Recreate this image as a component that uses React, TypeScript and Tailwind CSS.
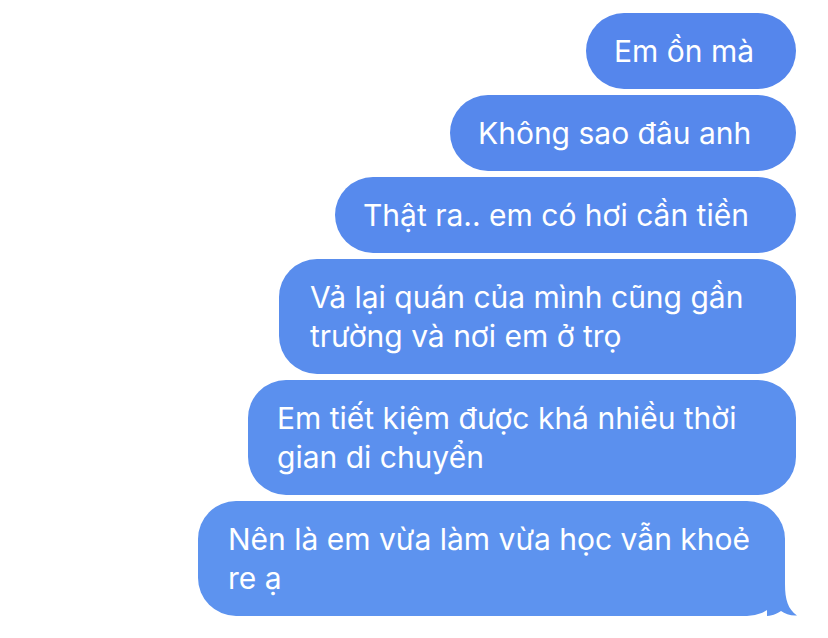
const messages = [
  { text: "Em ồn mà", width: "w-[210px]", bg: "bg-[#5586ec]" },
  { text: "Không sao đâu anh", width: "w-[346px]", bg: "bg-[#5688ec]" },
  { text: "Thật ra.. em có hơi cần tiền", width: "w-[461px]", bg: "bg-[#578aed]" },
  { text: "Vả lại quán của mình cũng gần trường và nơi em ở trọ", width: "w-[517px]", bg: "bg-[#598ded]", pl: "pl-[31px]" },
  { text: "Em tiết kiệm được khá nhiều thời gian di chuyển", width: "w-[548px]", bg: "bg-[#5b90ee]", pl: "pl-[29px]" },
];

function Tail() {
  return (
    <svg
      className="absolute right-[-12px] bottom-0"
      width="30"
      height="40"
      viewBox="0 0 30 40"
    >
      <path
        d="M0 0 H18 V8 C18 24 21 33 30 39.5 C24 40 18 38 14 35 C11 37 7 39.5 0 40 Z"
        fill="#5d93ef"
      />
    </svg>
  );
}

export default function App() {
  return (
    <div
      className="w-[828px] h-[638px] bg-white overflow-hidden"
      style={{ fontFamily: "Inter, 'Noto Sans', sans-serif" }}
    >
      <div className="flex flex-col items-end gap-[6px] pt-[13px] pr-[32px]">
        {messages.map((m) => (
          <div
            key={m.text}
            className={`${m.width} ${m.bg} ${m.pl ?? "pl-[28px]"} pr-[36px] py-[18.5px] rounded-[38px] text-white text-[30px] leading-[39px]`}
          >
            {m.text}
          </div>
        ))}
        <div className="relative mr-[11px] w-[587px] bg-[#5d93ef] pl-[30px] pr-[26px] py-[18.5px] rounded-[38px] text-white text-[30px] leading-[39px]">
          Nên là em vừa làm vừa học vẫn khoẻ re ạ
          <Tail />
        </div>
      </div>
    </div>
  );
}
